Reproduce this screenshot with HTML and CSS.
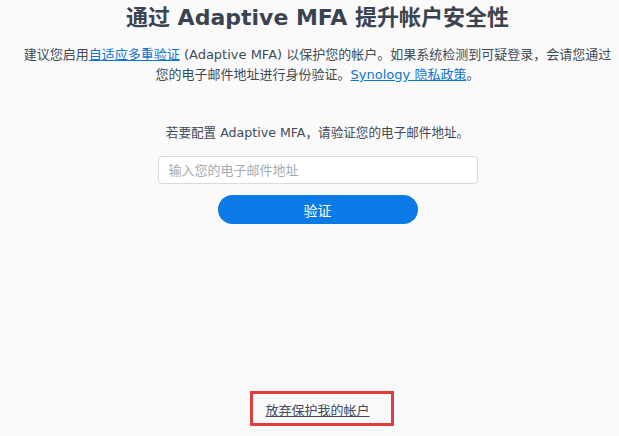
FILE: index.html
```html
<!DOCTYPE html>
<html lang="zh-CN">
<head>
    <meta charset="UTF-8">
    <meta name="viewport" content="width=device-width, initial-scale=1.0">
    <title>Adaptive MFA</title>
    <link rel="stylesheet" href="styles.css">
</head>
<body>
    <div class="page">
        <h1 class="title">通过 Adaptive MFA 提升帐户安全性</h1>
        <p class="desc">建议您启用<a href="#">自适应多重验证</a> (Adaptive MFA) 以保护您的帐户。如果系统检测到可疑登录，会请您通过<br>您的电子邮件地址进行身份验证。<a href="#">Synology 隐私政策</a>。</p>
        <div class="form">
            <p class="hint">若要配置 Adaptive MFA，请验证您的电子邮件地址。</p>
            <input type="text" placeholder="输入您的电子邮件地址">
            <button>验证</button>
        </div>
        <div class="footer">
            <a href="#" class="skip">放弃保护我的帐户</a>
        </div>
    </div>
</body>
</html>
```

FILE: styles.css
```css
*{
    margin: 0px;
    padding: 0px;
    box-sizing: border-box;
    outline: none;
}
body{
    background-color: #fafafa;
    font-family: "DejaVu Sans", "Noto Sans CJK SC", sans-serif;
    color: #414b55;
}
.page{
    width: 619px;
    height: 436px;
    padding-left: 16px;
    display: flex;
    flex-direction: column;
    align-items: center;
}
.title{
    font-size: 22px;
    font-weight: bold;
    color: #3a4451;
    line-height: 30px;
    margin-top: 3px;
}
.desc{
    font-size: 13px;
    line-height: 20px;
    text-align: center;
    margin-top: 12px;
}
.desc a{
    color: #0f73d0;
}
.form{
    display: flex;
    flex-direction: column;
    align-items: center;
    margin-top: 38px;
}
.hint{
    font-size: 12.6px;
    line-height: 20px;
}
input{
    width: 320px;
    height: 28px;
    margin-top: 13px;
    border: 1px solid #d5dbe1;
    border-radius: 4px;
    background: #fff;
    padding: 0px 10px;
    font-family: inherit;
    font-size: 13px;
    color: #414b55;
}
::placeholder{
    color: #a4abb3;
}
button{
    width: 200px;
    height: 29px;
    margin-top: 11px;
    border: none;
    border-radius: 15px;
    background-color: #0a7ae6;
    color: #fff;
    font-family: inherit;
    font-size: 14px;
}
.footer{
    margin-top: auto;
    margin-bottom: 10px;
    margin-left: 9px;
    border: 3px solid #e03c3c;
    padding: 7px 21px 2px 12px;
}
.skip{
    display: block;
    font-size: 13px;
    line-height: 20px;
    color: #414b55;
}
```
